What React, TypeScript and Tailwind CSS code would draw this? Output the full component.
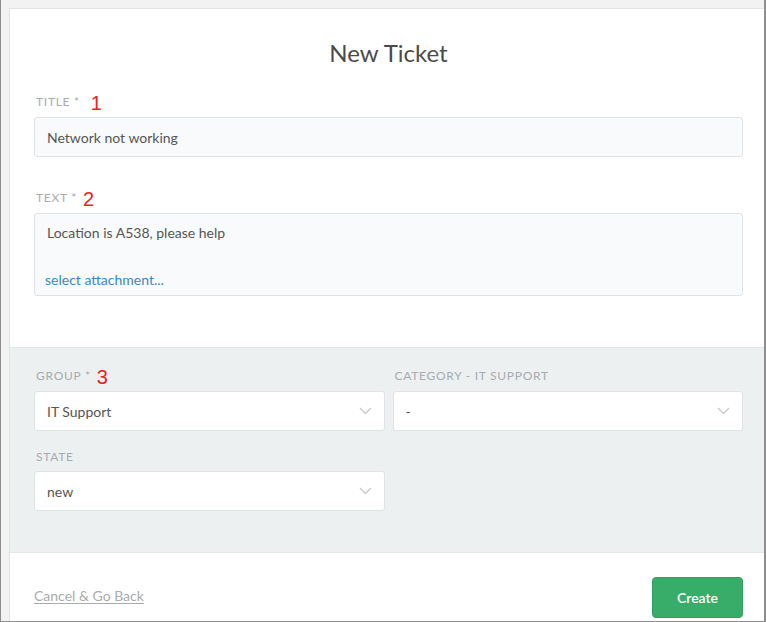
import React from "react";

const font = { fontFamily: "Lato, 'Open Sans', sans-serif" };

function Chevron() {
  return (
    <svg width="13" height="8" viewBox="0 0 13 8" fill="none" className="shrink-0">
      <path d="M1 1l5.5 5.5L12 1" stroke="#c7cbce" strokeWidth="1.4" />
    </svg>
  );
}

function FieldLabel({ text, mark, gap }: { text: string; mark?: string; gap?: string }) {
  return (
    <div className="flex h-4 items-center pl-[2px] text-[12px] uppercase tracking-[0.06em] text-[#a7abaf]">
      <span>{text}</span>
      {mark && (
        <span
          className={`relative top-[1px] text-[20px] leading-none tracking-normal text-[#e8231e] ${gap ?? "ml-2"}`}
          style={{ fontFamily: "'Liberation Sans', sans-serif" }}
        >
          {mark}
        </span>
      )}
    </div>
  );
}

function Select({ value }: { value: string }) {
  return (
    <div className="flex h-10 items-center justify-between rounded-[3px] border border-[#dfe3e5] bg-white pl-3 pr-3 text-[14px] text-[#555]">
      <span>{value}</span>
      <Chevron />
    </div>
  );
}

export default function App() {
  return (
    <div
      className="flex h-[622px] w-[766px] flex-col border-b border-l border-r-2 border-[#8e8e8e] bg-[#f2f2f2] pl-2 pr-0 pt-2"
      style={font}
    >
      <div className="flex flex-1 flex-col border-l border-t border-[#e3e3e3] bg-white">
        <div className="pl-6 pr-[21px] pt-[28px]">
          <h1 className="text-center text-[24px] leading-[32px] text-[#4a4a4a]">New Ticket</h1>
          <div className="mt-[25px]">
            <FieldLabel text="Title *" mark="1" gap="ml-[11px]" />
            <div className="mt-[7px] flex h-10 items-center rounded-[3px] border border-[#dfe3e5] bg-[#f9fafb] px-3 text-[14px] text-[#555]">
              Network not working
            </div>
          </div>
          <div className="mt-[33px]">
            <FieldLabel text="Text *" mark="2" gap="ml-[6px]" />
            <div className="mt-[7px] flex h-[83px] flex-col rounded-[3px] border border-[#dfe3e5] bg-[#f9fafb] pl-[10px] pr-3 pt-[9px] text-[14px]">
              <span className="pl-[2px] leading-[20px] text-[#555]">Location is A538, please help</span>
              <span className="mt-[27px] leading-[20px] text-[#3a87c8]">select attachment...</span>
            </div>
          </div>
        </div>
        <div className="mt-[51px] border-b border-t border-[#e2e6e8] bg-[#edf0f1] pb-[41px] pl-6 pr-[21px] pt-[20px]">
          <div className="grid grid-cols-2 gap-x-2">
            <div>
              <FieldLabel text="Group *" mark="3" gap="ml-[6px]" />
              <div className="mt-[7px]">
                <Select value="IT Support" />
              </div>
            </div>
            <div>
              <FieldLabel text="Category - IT Support" />
              <div className="mt-[7px]">
                <Select value="-" />
              </div>
            </div>
            <div className="mt-[18px]">
              <FieldLabel text="State" />
              <div className="mt-[6px]">
                <Select value="new" />
              </div>
            </div>
          </div>
        </div>
        <div className="flex flex-1 items-end justify-between pb-[3px] pl-6 pr-[21px]">
          <a className="mb-[12px] text-[14px] text-[#a9abad] underline underline-offset-2">Cancel &amp; Go Back</a>
          <button className="h-[41px] w-[91px] rounded-[4px] border border-[#2f9e5e] bg-[#38ad69] text-[14px] font-semibold text-white">
            Create
          </button>
        </div>
      </div>
    </div>
  );
}
